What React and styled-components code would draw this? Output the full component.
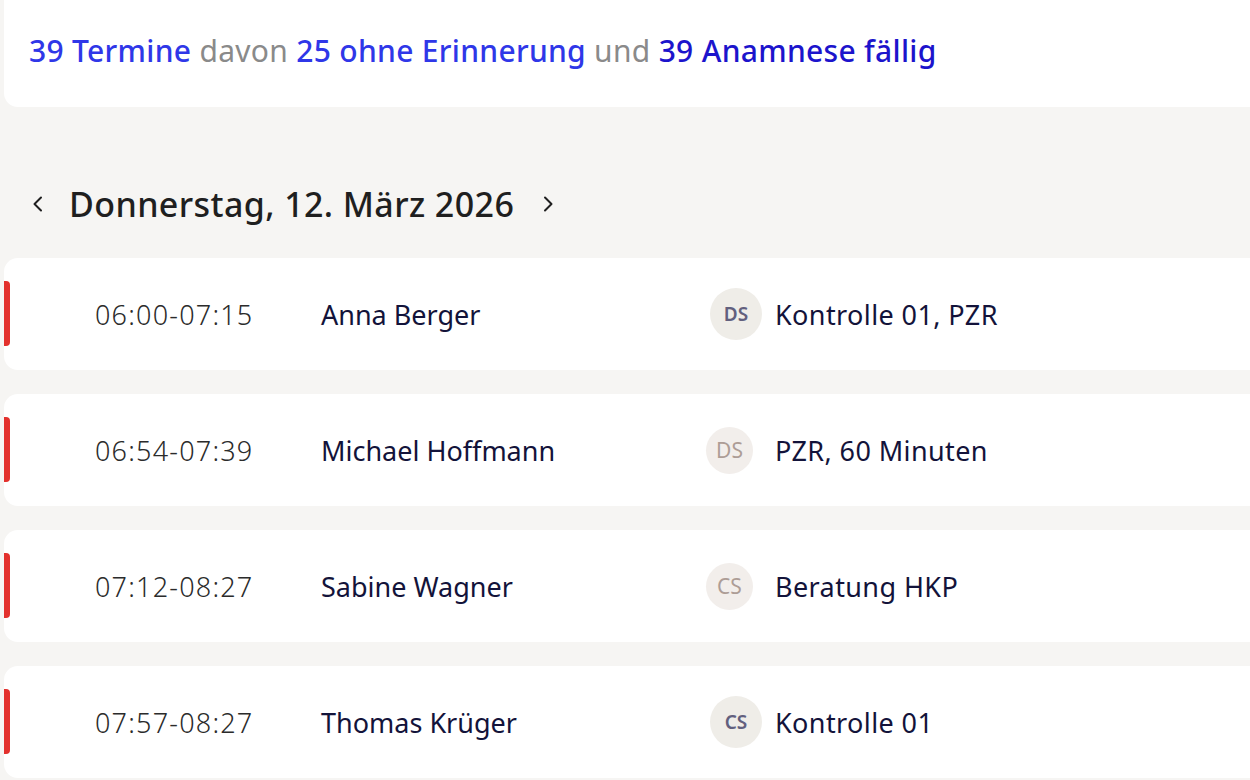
import React from "react";
import styled, { createGlobalStyle } from "styled-components";

const GlobalStyle = createGlobalStyle`
  html, body {
    margin: 0;
    padding: 0;
    background: #f6f5f3;
    font-family: "Noto Sans", "Open Sans", sans-serif;
    overflow: hidden;
  }
`;

const Page = styled.div`
  padding-left: 4px;
  height: 780px;
  overflow: hidden;
`;

const SummaryCard = styled.div`
  margin-top: -16px;
  height: 123px;
  background: #fff;
  border-radius: 14px 0 0 14px;
  display: flex;
  align-items: center;
  padding: 10px 0 0 25px;
  box-sizing: border-box;
  font-size: 30px;
  font-weight: 500;
  letter-spacing: 0.3px;
  white-space: nowrap;
`;

const Count = styled.span`
  color: ${(p) => (p.$dark ? "#1c14cc" : "#2f37e8")};
`;

const Filler = styled.span`
  color: #8a8a8a;
  font-weight: 400;
`;

const DateBar = styled.div`
  display: flex;
  align-items: center;
  height: 56px;
  margin: 69px 0 26px 0;
  padding-left: 24px;
  color: #1f1f1f;
`;

const NavButton = styled.button`
  border: 0;
  background: none;
  padding: 0;
  width: 20px;
  height: 30px;
  display: flex;
  align-items: center;
  justify-content: center;
  color: #1f1f1f;
  cursor: pointer;
`;

const DateTitle = styled.h2`
  margin: 0 24px 0 21px;
  font-size: 34px;
  font-weight: 500;
  letter-spacing: 0.4px;
`;

const List = styled.div`
  display: flex;
  flex-direction: column;
  gap: 24px;
`;

const Card = styled.div`
  position: relative;
  height: 112px;
  background: #fff;
  border-radius: 14px 0 0 14px;
  display: grid;
  grid-template-columns: 226px 385px 69px 1fr;
  align-items: center;
  padding-left: 91px;
  font-size: 27px;
  white-space: nowrap;
`;

const Marker = styled.span`
  position: absolute;
  left: 0;
  top: 23px;
  width: 6px;
  height: 65px;
  background: #e3312d;
  border-radius: 0 4px 4px 0;
`;

const Time = styled.span`
  color: #2b2b2b;
  letter-spacing: 1.2px;
  font-weight: 350;
`;

const Name = styled.span`
  color: #13133a;
`;

const Avatar = styled.span`
  width: ${(p) => (p.$active ? 52 : 47)}px;
  height: ${(p) => (p.$active ? 52 : 47)}px;
  margin-left: ${(p) => (p.$active ? 4 : 0)}px;
  border-radius: 50%;
  background: ${(p) => (p.$active ? "#efede8" : "#f2eeeb")};
  color: ${(p) => (p.$active ? "#62607e" : "#ad9d96")};
  font-weight: ${(p) => (p.$active ? 600 : 400)};
  font-size: ${(p) => (p.$active ? 19 : 21)}px;
  display: flex;
  align-items: center;
  justify-content: center;
`;

const Treatment = styled.span`
  color: #13133a;
  letter-spacing: 0.4px;
`;

const Chevron = ({ dir }) => (
  <svg width="12" height="16" viewBox="0 0 12 16" fill="none">
    <path
      d={dir === "left" ? "M9 1.5 L2.5 8 L9 14.5" : "M3 1.5 L9.5 8 L3 14.5"}
      stroke="currentColor"
      strokeWidth="2"
      strokeLinecap="round"
      strokeLinejoin="round"
    />
  </svg>
);

const appointments = [
  { time: "06:00-07:15", name: "Anna Berger", who: "DS", active: true, what: "Kontrolle 01, PZR" },
  { time: "06:54-07:39", name: "Michael Hoffmann", who: "DS", active: false, what: "PZR, 60 Minuten" },
  { time: "07:12-08:27", name: "Sabine Wagner", who: "CS", active: false, what: "Beratung HKP" },
  { time: "07:57-08:27", name: "Thomas Krüger", who: "CS", active: true, what: "Kontrolle 01" },
];

export default function App() {
  return (
    <>
      <GlobalStyle />
      <Page>
        <SummaryCard>
          <Count>39 Termine</Count>
          <Filler>&nbsp;davon&nbsp;</Filler>
          <Count>25 ohne Erinnerung</Count>
          <Filler>&nbsp;und&nbsp;</Filler>
          <Count $dark>39 Anamnese fällig</Count>
        </SummaryCard>

        <DateBar>
          <NavButton aria-label="Vorheriger Tag">
            <Chevron dir="left" />
          </NavButton>
          <DateTitle>Donnerstag, 12. März 2026</DateTitle>
          <NavButton aria-label="Nächster Tag">
            <Chevron dir="right" />
          </NavButton>
        </DateBar>

        <List>
          {appointments.map((a) => (
            <Card key={a.time}>
              <Marker />
              <Time>{a.time}</Time>
              <Name>{a.name}</Name>
              <Avatar $active={a.active}>{a.who}</Avatar>
              <Treatment>{a.what}</Treatment>
            </Card>
          ))}
        </List>
      </Page>
    </>
  );
}
